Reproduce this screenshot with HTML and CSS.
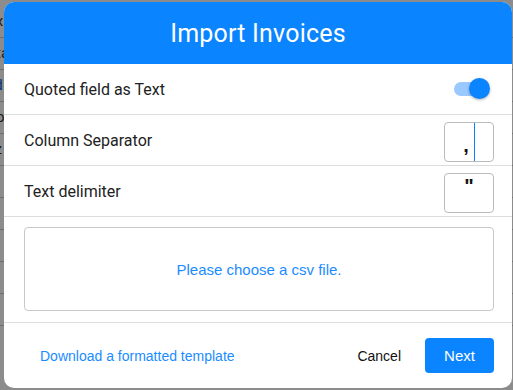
FILE: index.html
```html
<!DOCTYPE html>
<html>
<head>
    <title>Import Invoices</title>
    <link rel="stylesheet" href="styles.css">
</head>
<body>
    <div class="page">
        <div class="page-row">Box</div>
        <div class="page-row">Data</div>
        <div class="page-row link">Sxd</div>
        <div class="page-row">Boo</div>
        <div class="page-row">Zzz</div>
        <div class="page-row link">Ad</div>
        <div class="page-row big">Id</div>
        <div class="page-row">Fir</div>
        <div class="page-row big">At</div>
        <div class="page-row">Eg</div>
    </div>
    <div class="backdrop"></div>

    <div class="modal">
        <div class="modal-header">Import Invoices</div>

        <div class="option-row">
            <span class="option-label">Quoted field as Text</span>
            <div class="switch">
                <div class="switch-track"></div>
                <div class="switch-knob"></div>
            </div>
        </div>
        <div class="option-row">
            <span class="option-label">Column Separator</span>
            <div class="char-box focused"><span class="char">,</span><span class="caret"></span></div>
        </div>
        <div class="option-row">
            <span class="option-label">Text delimiter</span>
            <div class="char-box"><span class="char quote">"</span></div>
        </div>

        <div class="drop-area">
            <div class="drop-zone">Please choose a csv file.</div>
        </div>

        <div class="modal-footer">
            <a class="template-link" href="#">Download a formatted template</a>
            <div class="footer-actions">
                <button class="btn-cancel">Cancel</button>
                <button class="btn-next">Next</button>
            </div>
        </div>
    </div>
</body>
</html>
```

FILE: styles.css
```css
body {
    margin: 0;
    width: 513px;
    height: 390px;
    overflow: hidden;
    background-color: #fff;
    font-family: Roboto, "Liberation Sans", sans-serif;
    position: relative;
}

.page {
    margin-left: -22px;
    padding-top: 6px;
}

.page-row {
    height: 31px;
    line-height: 31px;
    border-bottom: 1px solid #ccc;
    font-size: 15px;
    color: #333;
}

.page-row.link {
    color: #0066cc;
}

.page-row.big {
    font-size: 20px;
    color: #222;
}

.backdrop {
    position: absolute;
    inset: 0;
    background-color: rgba(0, 0, 0, 0.45);
}

.modal {
    position: absolute;
    left: 4px;
    top: 2px;
    width: 508px;
    height: 386px;
    background-color: #fff;
    border-radius: 10px;
    overflow: hidden;
    display: flex;
    flex-direction: column;
}

.modal-header {
    height: 62px;
    flex-shrink: 0;
    background-color: #0a84ff;
    color: #fff;
    font-size: 25px;
    display: flex;
    align-items: center;
    justify-content: center;
    letter-spacing: 0.2px;
}

.option-row {
    height: 50px;
    flex-shrink: 0;
    display: flex;
    align-items: center;
    justify-content: space-between;
    padding: 0 18px 0 20px;
    border-bottom: 1px solid #ddd;
}

.option-label {
    font-size: 16px;
    color: #222;
}

.switch {
    position: relative;
    width: 40px;
    height: 22px;
    margin-right: 2px;
}

.switch-track {
    position: absolute;
    left: 2px;
    top: 4px;
    width: 34px;
    height: 14px;
    border-radius: 7px;
    background-color: #99c9ff;
}

.switch-knob {
    position: absolute;
    left: 17px;
    top: 0;
    width: 21px;
    height: 21px;
    border-radius: 50%;
    background-color: #0a84ff;
    box-shadow: 0 1px 3px rgba(0, 0, 0, 0.3);
}

.char-box {
    width: 48px;
    height: 38px;
    border: 1px solid #bbb;
    border-radius: 4px;
    display: flex;
    justify-content: center;
    font-family: "Liberation Sans", sans-serif;
    font-weight: bold;
    font-size: 20px;
    line-height: 38px;
    color: #111;
    margin-top: 3px;
}

.focused .char {
    padding-top: 3px;
}

.char.quote {
    margin-top: -7px;
}

.caret {
    width: 1px;
    background-color: #0a84ff;
    margin-left: 5px;
}

.drop-area {
    flex: 1;
    padding: 10px 18px 11px 20px;
    border-bottom: 1px solid #ddd;
    display: flex;
}

.drop-zone {
    flex: 1;
    border: 1px solid #c8c8c8;
    border-radius: 4px;
    display: flex;
    align-items: center;
    justify-content: center;
    font-family: "Liberation Sans", sans-serif;
    font-size: 15px;
    color: #1a8cff;
}

.modal-footer {
    height: 65px;
    flex-shrink: 0;
    display: flex;
    align-items: center;
    justify-content: space-between;
    padding: 0 18px 0 36px;
}

.template-link {
    font-family: "Liberation Sans", sans-serif;
    font-size: 14px;
    color: #1a8cff;
    text-decoration: none;
}

.footer-actions {
    display: flex;
    align-items: center;
    gap: 14px;
}

.btn-cancel {
    background: none;
    border: none;
    font-family: "Liberation Sans", sans-serif;
    font-size: 14px;
    color: #111;
    padding: 0 10px;
}

.btn-next {
    width: 69px;
    height: 35px;
    border: none;
    border-radius: 4px;
    background-color: #0a84ff;
    color: #fff;
    font-family: "Liberation Sans", sans-serif;
    font-size: 15px;
}
```
